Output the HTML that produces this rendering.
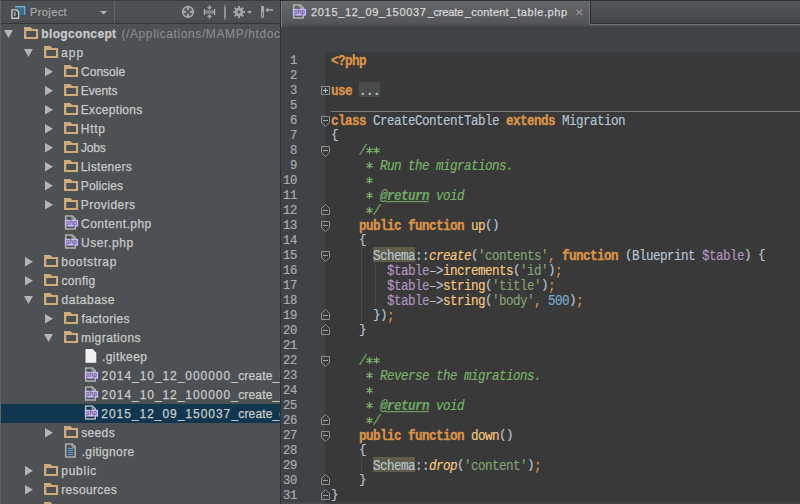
<!DOCTYPE html>
<html>
<head>
<meta charset="utf-8">
<title>PhpStorm</title>
<style>
*{margin:0;padding:0;box-sizing:border-box}
html,body{width:800px;height:504px;overflow:hidden;background:#4d5153}
body{position:relative;font-family:"Liberation Sans",sans-serif;font-size:12px;color:#c8caca}
.abs{position:absolute}
svg{position:absolute;overflow:visible}
/* ---------- sidebar ---------- */
#side{position:absolute;left:0;top:0;width:280px;height:504px;background:#4d5153;overflow:hidden}
#side:before{content:"";position:absolute;left:0;top:0;width:1px;height:504px;background:#5f6365;z-index:5}
#hdr{position:absolute;left:0;top:0;width:280px;height:24px;background:linear-gradient(#4d5153 0,#4b4f52 18px,#464a4d 22px);border-top:1px solid #393c3e;border-bottom:1px solid #34373a}
.row{position:absolute;left:0;width:280px;height:19px;white-space:nowrap}
.tx{position:absolute;white-space:nowrap;font-size:12px;line-height:14px;color:#c8caca;-webkit-text-stroke:0.25px}
.tx.b{font-weight:bold}
.hid{visibility:hidden}
.tx.g{color:#8b8e90;-webkit-text-stroke:0.1px}
.tx.g2{color:#a6a8aa;font-size:11px}
.tx.tt{color:#d6d8d9;font-size:11px}
.row.sel{background:#10374f}
/* ---------- editor ---------- */
#split{position:absolute;left:280px;top:0;width:1px;height:504px;background:#2e3032}
#ed{position:absolute;left:281px;top:0;width:519px;height:504px;background:#3f4346;overflow:hidden}
#tabbar{position:absolute;left:0;top:0;width:519px;height:27px;background:#2e3032}
#tabbar .inact{position:absolute;left:309px;top:1px;width:210px;height:22px;background:linear-gradient(#5a5c5e 0,#515355 1px,#515355 2px,#464849 100%);border-left:1px solid #2e3032}
#tabbar .strip{position:absolute;left:309px;top:24px;width:210px;height:3px;background:linear-gradient(#6c6e70 0,#6c6e70 1px,#535558 1px,#44474a 100%)}
#tab{position:absolute;left:0;top:1px;width:309px;height:26px;background:linear-gradient(#6f7173 0,#646668 1px,#5d5f61 10px,#55575a 20px,#505255 23px,#44474a 100%);border-left:1px solid #7b7d7f}
#tab:after{content:"";position:absolute;right:0;top:0;width:1px;height:24px;background:#727476}
#code{position:absolute;left:44px;top:52px;width:475px;height:452px;background:#393939}
.ln{position:absolute;left:0;width:16px;text-align:right;height:15px;line-height:15px;font-family:"Liberation Mono",monospace;font-size:12.2px;letter-spacing:-0.32px;color:#a6abae;-webkit-text-stroke:0.2px;transform:scaleY(1.12);transform-origin:0 0}
.cl{position:absolute;left:50px;height:15px;line-height:15px;white-space:pre;font-family:"Liberation Mono",monospace;font-size:12.6px;letter-spacing:-0.56px;color:#b7c4d1;-webkit-text-stroke:0.15px;transform:scaleY(1.1);transform-origin:0 0}
.br{display:inline-block;transform:translateY(-1px) scaleY(.87);transform-origin:50% 6.8px}
.k{color:#dc9349;font-weight:bold;-webkit-text-stroke:0.3px}
.s{color:#82a274}
.v{color:#b093bd}
.n{color:#7aaad0}
.f{color:#f9c87f}
.fi{color:#f9c87f;font-style:italic}
.o{color:#dc9349}
.d{color:#79b26a;font-style:italic}
.dt{color:#70a663;font-style:italic;font-weight:bold;text-decoration:underline}
.fd{color:#b4c2ce;font-weight:bold}
</style>
</head>
<body>
<div id="side">
<div id="hdr">
<svg style="left:10.5px;top:5px" width="15" height="13" viewBox="0 0 15 13"><rect x="4" y="0.3" width="10" height="8.7" fill="#3f6a89"/><path d="M4 0.6H13.7V9" fill="none" stroke="#73b3df" stroke-width="1.1"/><path d="M0.9 3.9H5.6L7.6 5.9V12.3H0.9Z" fill="#3c3f41" stroke="#c3c5c6" stroke-width="1.4"/><rect x="2.6" y="5.6" width="2.3" height="4.6" fill="#8a8c8e"/></svg>
<span class="tx g2 " id="t_proj" style="left:29.99px;top:4px;letter-spacing:0.395px">Project</span>
<svg style="left:99.5px;top:10.3px" width="7" height="4" viewBox="0 0 7 4"><path d="M0 0H7L3.5 3.6Z" fill="#b4b6b7"/></svg>
<div class="abs" style="left:114px;top:0;width:1px;height:22px;background:#5f6365"></div>
<svg style="left:181px;top:4px" width="14" height="14" viewBox="0 0 14 14"><circle cx="7" cy="6.9" r="5.3" fill="none" stroke="#a2a5a7" stroke-width="1.7"/><path d="M7 1.5V5.2M7 8.6V12.3M1.6 6.9H5.3M8.7 6.9H12.4" stroke="#a2a5a7" stroke-width="2.2"/></svg>
<svg style="left:203px;top:3px" width="13" height="16" viewBox="0 0 13 16"><rect x="1.4" y="6.3" width="10.2" height="3.4" fill="#85878a"/><path d="M1.4 5V11M11.6 5V11" stroke="#b6b8ba" stroke-width="1.1"/><path d="M6.5 1V4M6.5 12V15" stroke="#a2a5a7" stroke-width="1.3"/><path d="M3.9 2.9H9.1L6.5 5.9ZM3.9 13.1H9.1L6.5 10.1Z" fill="#a2a5a7"/></svg>
<div class="abs" style="left:224px;top:3px;width:2px;height:17px;background:linear-gradient(#4d5153,#929496 22%,#929496 78%,#4b4f52)"></div>
<svg style="left:232px;top:4px" width="14" height="14" viewBox="0 0 14 14"><path fill-rule="evenodd" d="M12.98 5.81L12.98 8.19L11.32 7.86L10.66 9.44L12.07 10.39L10.39 12.07L9.44 10.66L7.86 11.32L8.19 12.98L5.81 12.98L6.14 11.32L4.56 10.66L3.61 12.07L1.93 10.39L3.34 9.44L2.68 7.86L1.02 8.19L1.02 5.81L2.68 6.14L3.34 4.56L1.93 3.61L3.61 1.93L4.56 3.34L6.14 2.68L5.81 1.02L8.19 1.02L7.86 2.68L9.44 3.34L10.39 1.93L12.07 3.61L10.66 4.56L11.32 6.14Z M8.5 7A1.5 1.5 0 1 0 5.5 7A1.5 1.5 0 1 0 8.5 7Z" fill="#a2a5a7"/></svg>
<svg style="left:247px;top:9.9px" width="5" height="3" viewBox="0 0 5 3"><path d="M0 0H5L2.5 3Z" fill="#a2a5a7"/></svg>
<svg style="left:261px;top:5px" width="13" height="12" viewBox="0 0 13 12"><rect x="0" y="0" width="3.1" height="11.6" fill="#a3a5a7"/><rect x="1.1" y="6" width="0.9" height="4.6" fill="#5a5d60"/><path d="M5 3.9H12" stroke="#a2a5a7" stroke-width="1.6"/><path d="M4.2 3.9L7.3 1.4V6.4Z" fill="#a2a5a7"/></svg>
</div>
<div class="row" style="top:24px"><svg style="left:4.2px;top:6px" width="9" height="8" viewBox="0 0 9 8"><path d="M0 0H9L4.5 8Z" fill="#b2b4b5"/></svg><svg style="left:24px;top:3px" width="14" height="12" viewBox="0 0 14 12"><path fill-rule="evenodd" d="M0 0H6.1L8.4 2.1H14.1V12H0Z M2.3 4.1H12V9.9H2.3Z" fill="#cfaa7b"/></svg><span class="tx b" id="r0" style="left:41.27px;top:3px;letter-spacing:0.350px">blogconcept</span><span class="tx g" id="r0g" style="left:121.45px;top:3px;letter-spacing:0.604px">(/Applications/MAMP/htdocs/blogconcept)</span></div>
<div class="row" style="top:43px"><svg style="left:24.2px;top:6px" width="9" height="8" viewBox="0 0 9 8"><path d="M0 0H9L4.5 8Z" fill="#b2b4b5"/></svg><svg style="left:44px;top:3px" width="14" height="12" viewBox="0 0 14 12"><path fill-rule="evenodd" d="M0 0H6.1L8.4 2.1H14.1V12H0Z M2.3 4.1H12V9.9H2.3Z" fill="#cfaa7b"/></svg><span class="tx " id="r1" style="left:61.11px;top:3px;letter-spacing:1.021px">app</span></div>
<div class="row" style="top:62px"><svg style="left:45.2px;top:5px" width="8" height="10" viewBox="0 0 8 10"><path d="M0 0L8 4.75L0 9.5Z" fill="#b2b4b5"/></svg><svg style="left:64px;top:3px" width="14" height="12" viewBox="0 0 14 12"><path fill-rule="evenodd" d="M0 0H6.1L8.4 2.1H14.1V12H0Z M2.3 4.1H12V9.9H2.3Z" fill="#cfaa7b"/></svg><span class="tx " id="r2" style="left:81.05px;top:3px;letter-spacing:0.007px">Console</span></div>
<div class="row" style="top:81px"><svg style="left:45.2px;top:5px" width="8" height="10" viewBox="0 0 8 10"><path d="M0 0L8 4.75L0 9.5Z" fill="#b2b4b5"/></svg><svg style="left:64px;top:3px" width="14" height="12" viewBox="0 0 14 12"><path fill-rule="evenodd" d="M0 0H6.1L8.4 2.1H14.1V12H0Z M2.3 4.1H12V9.9H2.3Z" fill="#cfaa7b"/></svg><span class="tx " id="r3" style="left:80.76px;top:3px;letter-spacing:-0.002px">Events</span></div>
<div class="row" style="top:100px"><svg style="left:45.2px;top:5px" width="8" height="10" viewBox="0 0 8 10"><path d="M0 0L8 4.75L0 9.5Z" fill="#b2b4b5"/></svg><svg style="left:64px;top:3px" width="14" height="12" viewBox="0 0 14 12"><path fill-rule="evenodd" d="M0 0H6.1L8.4 2.1H14.1V12H0Z M2.3 4.1H12V9.9H2.3Z" fill="#cfaa7b"/></svg><span class="tx " id="r4" style="left:80.76px;top:3px;letter-spacing:0.324px">Exceptions</span></div>
<div class="row" style="top:119px"><svg style="left:45.2px;top:5px" width="8" height="10" viewBox="0 0 8 10"><path d="M0 0L8 4.75L0 9.5Z" fill="#b2b4b5"/></svg><svg style="left:64px;top:3px" width="14" height="12" viewBox="0 0 14 12"><path fill-rule="evenodd" d="M0 0H6.1L8.4 2.1H14.1V12H0Z M2.3 4.1H12V9.9H2.3Z" fill="#cfaa7b"/></svg><span class="tx " id="r5" style="left:80.85px;top:3px;letter-spacing:0.676px">Http</span></div>
<div class="row" style="top:138px"><svg style="left:45.2px;top:5px" width="8" height="10" viewBox="0 0 8 10"><path d="M0 0L8 4.75L0 9.5Z" fill="#b2b4b5"/></svg><svg style="left:64px;top:3px" width="14" height="12" viewBox="0 0 14 12"><path fill-rule="evenodd" d="M0 0H6.1L8.4 2.1H14.1V12H0Z M2.3 4.1H12V9.9H2.3Z" fill="#cfaa7b"/></svg><span class="tx " id="r6" style="left:80.90px;top:3px;letter-spacing:-0.175px">Jobs</span></div>
<div class="row" style="top:157px"><svg style="left:45.2px;top:5px" width="8" height="10" viewBox="0 0 8 10"><path d="M0 0L8 4.75L0 9.5Z" fill="#b2b4b5"/></svg><svg style="left:64px;top:3px" width="14" height="12" viewBox="0 0 14 12"><path fill-rule="evenodd" d="M0 0H6.1L8.4 2.1H14.1V12H0Z M2.3 4.1H12V9.9H2.3Z" fill="#cfaa7b"/></svg><span class="tx " id="r7" style="left:80.85px;top:3px;letter-spacing:0.278px">Listeners</span></div>
<div class="row" style="top:176px"><svg style="left:45.2px;top:5px" width="8" height="10" viewBox="0 0 8 10"><path d="M0 0L8 4.75L0 9.5Z" fill="#b2b4b5"/></svg><svg style="left:64px;top:3px" width="14" height="12" viewBox="0 0 14 12"><path fill-rule="evenodd" d="M0 0H6.1L8.4 2.1H14.1V12H0Z M2.3 4.1H12V9.9H2.3Z" fill="#cfaa7b"/></svg><span class="tx " id="r8" style="left:80.76px;top:3px;letter-spacing:0.130px">Policies</span></div>
<div class="row" style="top:195px"><svg style="left:45.2px;top:5px" width="8" height="10" viewBox="0 0 8 10"><path d="M0 0L8 4.75L0 9.5Z" fill="#b2b4b5"/></svg><svg style="left:64px;top:3px" width="14" height="12" viewBox="0 0 14 12"><path fill-rule="evenodd" d="M0 0H6.1L8.4 2.1H14.1V12H0Z M2.3 4.1H12V9.9H2.3Z" fill="#cfaa7b"/></svg><span class="tx " id="r9" style="left:80.76px;top:3px;letter-spacing:0.458px">Providers</span></div>
<div class="row" style="top:214px"><svg style="left:64px;top:1px" width="14" height="16" viewBox="0 0 14 16"><path d="M1.7 1H8.3L11.2 3.9V14H1.7Z" fill="none" stroke="#adafb0" stroke-width="1.6"/><path d="M8 1V4.2H11.2" fill="none" stroke="#adafb0" stroke-width="1"/><rect x="0.9" y="4.8" width="13.2" height="6.8" fill="#c7bbf8"/><text x="7.5" y="10.2" font-family="Liberation Sans" font-size="7.6" font-weight="bold" fill="#6e6390" text-anchor="middle" textLength="11" lengthAdjust="spacingAndGlyphs">php</text></svg><span class="tx " id="r10" style="left:81.05px;top:3px;letter-spacing:0.482px">Content.php</span></div>
<div class="row" style="top:233px"><svg style="left:64px;top:1px" width="14" height="16" viewBox="0 0 14 16"><path d="M1.7 1H8.3L11.2 3.9V14H1.7Z" fill="none" stroke="#adafb0" stroke-width="1.6"/><path d="M8 1V4.2H11.2" fill="none" stroke="#adafb0" stroke-width="1"/><rect x="0.9" y="4.8" width="13.2" height="6.8" fill="#c7bbf8"/><text x="7.5" y="10.2" font-family="Liberation Sans" font-size="7.6" font-weight="bold" fill="#6e6390" text-anchor="middle" textLength="11" lengthAdjust="spacingAndGlyphs">php</text></svg><span class="tx " id="r11" style="left:80.90px;top:3px;letter-spacing:0.607px">User.php</span></div>
<div class="row" style="top:252px"><svg style="left:25.2px;top:5px" width="8" height="10" viewBox="0 0 8 10"><path d="M0 0L8 4.75L0 9.5Z" fill="#b2b4b5"/></svg><svg style="left:44px;top:3px" width="14" height="12" viewBox="0 0 14 12"><path fill-rule="evenodd" d="M0 0H6.1L8.4 2.1H14.1V12H0Z M2.3 4.1H12V9.9H2.3Z" fill="#cfaa7b"/></svg><span class="tx " id="r12" style="left:61.26px;top:3px;letter-spacing:0.627px">bootstrap</span></div>
<div class="row" style="top:271px"><svg style="left:25.2px;top:5px" width="8" height="10" viewBox="0 0 8 10"><path d="M0 0L8 4.75L0 9.5Z" fill="#b2b4b5"/></svg><svg style="left:44px;top:3px" width="14" height="12" viewBox="0 0 14 12"><path fill-rule="evenodd" d="M0 0H6.1L8.4 2.1H14.1V12H0Z M2.3 4.1H12V9.9H2.3Z" fill="#cfaa7b"/></svg><span class="tx " id="r13" style="left:61.46px;top:3px;letter-spacing:0.364px">config</span></div>
<div class="row" style="top:290px"><svg style="left:24.2px;top:6px" width="9" height="8" viewBox="0 0 9 8"><path d="M0 0H9L4.5 8Z" fill="#b2b4b5"/></svg><svg style="left:44px;top:3px" width="14" height="12" viewBox="0 0 14 12"><path fill-rule="evenodd" d="M0 0H6.1L8.4 2.1H14.1V12H0Z M2.3 4.1H12V9.9H2.3Z" fill="#cfaa7b"/></svg><span class="tx " id="r14" style="left:61.52px;top:3px;letter-spacing:0.519px">database</span></div>
<div class="row" style="top:309px"><svg style="left:45.2px;top:5px" width="8" height="10" viewBox="0 0 8 10"><path d="M0 0L8 4.75L0 9.5Z" fill="#b2b4b5"/></svg><svg style="left:64px;top:3px" width="14" height="12" viewBox="0 0 14 12"><path fill-rule="evenodd" d="M0 0H6.1L8.4 2.1H14.1V12H0Z M2.3 4.1H12V9.9H2.3Z" fill="#cfaa7b"/></svg><span class="tx " id="r15" style="left:81.50px;top:3px;letter-spacing:0.329px">factories</span></div>
<div class="row" style="top:328px"><svg style="left:44.2px;top:6px" width="9" height="8" viewBox="0 0 9 8"><path d="M0 0H9L4.5 8Z" fill="#b2b4b5"/></svg><svg style="left:64px;top:3px" width="14" height="12" viewBox="0 0 14 12"><path fill-rule="evenodd" d="M0 0H6.1L8.4 2.1H14.1V12H0Z M2.3 4.1H12V9.9H2.3Z" fill="#cfaa7b"/></svg><span class="tx " id="r16" style="left:80.94px;top:3px;letter-spacing:0.470px">migrations</span></div>
<div class="row" style="top:347px"><svg style="left:85px;top:2px" width="12" height="15" viewBox="0 0 12 15"><path d="M0.5 0H7.5L11.3 3.8V13.8H0.5Z" fill="#f2f2f2"/></svg><span class="tx " id="r17" style="left:101.95px;top:3px;letter-spacing:0.423px">.gitkeep</span></div>
<div class="row" style="top:366px"><svg style="left:84px;top:1px" width="14" height="16" viewBox="0 0 14 16"><path d="M1.7 1H8.3L11.2 3.9V14H1.7Z" fill="none" stroke="#adafb0" stroke-width="1.6"/><path d="M8 1V4.2H11.2" fill="none" stroke="#adafb0" stroke-width="1"/><rect x="0.9" y="4.8" width="13.2" height="6.8" fill="#c7bbf8"/><text x="7.5" y="10.2" font-family="Liberation Sans" font-size="7.6" font-weight="bold" fill="#6e6390" text-anchor="middle" textLength="11" lengthAdjust="spacingAndGlyphs">php</text></svg><span class="tx " id="r18" style="left:101.55px;top:3px;letter-spacing:0.945px">2014_10_12_000000</span><span class="tx " id="r18b" style="left:231.30px;top:3px;letter-spacing:0.176px">_create_users_table.php</span></div>
<div class="row" style="top:385px"><svg style="left:84px;top:1px" width="14" height="16" viewBox="0 0 14 16"><path d="M1.7 1H8.3L11.2 3.9V14H1.7Z" fill="none" stroke="#adafb0" stroke-width="1.6"/><path d="M8 1V4.2H11.2" fill="none" stroke="#adafb0" stroke-width="1"/><rect x="0.9" y="4.8" width="13.2" height="6.8" fill="#c7bbf8"/><text x="7.5" y="10.2" font-family="Liberation Sans" font-size="7.6" font-weight="bold" fill="#6e6390" text-anchor="middle" textLength="11" lengthAdjust="spacingAndGlyphs">php</text></svg><span class="tx " id="r19" style="left:101.55px;top:3px;letter-spacing:0.945px">2014_10_12_100000</span><span class="tx " id="r19b" style="left:231.30px;top:3px;letter-spacing:0.176px">_create_password_resets_table.php</span></div>
<div class="row sel" style="top:404px"><svg style="left:84px;top:1px" width="14" height="16" viewBox="0 0 14 16"><path d="M1.7 1H8.3L11.2 3.9V14H1.7Z" fill="none" stroke="#adafb0" stroke-width="1.6"/><path d="M8 1V4.2H11.2" fill="none" stroke="#adafb0" stroke-width="1"/><rect x="0.9" y="4.8" width="13.2" height="6.8" fill="#c7bbf8"/><text x="7.5" y="10.2" font-family="Liberation Sans" font-size="7.6" font-weight="bold" fill="#6e6390" text-anchor="middle" textLength="11" lengthAdjust="spacingAndGlyphs">php</text></svg><span class="tx " id="r20" style="left:101.28px;top:3px;letter-spacing:0.971px">2015_12_09_150037</span><span class="tx " id="r20b" style="left:231.50px;top:3px;letter-spacing:0.141px">_create_content_table.php</span></div>
<div class="row" style="top:423px"><svg style="left:45.2px;top:5px" width="8" height="10" viewBox="0 0 8 10"><path d="M0 0L8 4.75L0 9.5Z" fill="#b2b4b5"/></svg><svg style="left:64px;top:3px" width="14" height="12" viewBox="0 0 14 12"><path fill-rule="evenodd" d="M0 0H6.1L8.4 2.1H14.1V12H0Z M2.3 4.1H12V9.9H2.3Z" fill="#cfaa7b"/></svg><span class="tx " id="r21" style="left:81.19px;top:3px;letter-spacing:0.357px">seeds</span></div>
<div class="row" style="top:442px"><svg style="left:64px;top:1px" width="14" height="16" viewBox="0 0 14 16"><path d="M1.7 1H8.3L11.2 3.9V14H1.7Z" fill="none" stroke="#a9abac" stroke-width="1.6"/><path d="M8 1V4.2H11.2" fill="none" stroke="#a9abac" stroke-width="1"/><path d="M4 5.5H9M4 7.5H9M4 9.5H9M4 11.5H9" stroke="#5ea6d8" stroke-width="1"/></svg><span class="tx " id="r22" style="left:81.70px;top:3px;letter-spacing:0.345px">.gitignore</span></div>
<div class="row" style="top:461px"><svg style="left:25.2px;top:5px" width="8" height="10" viewBox="0 0 8 10"><path d="M0 0L8 4.75L0 9.5Z" fill="#b2b4b5"/></svg><svg style="left:44px;top:3px" width="14" height="12" viewBox="0 0 14 12"><path fill-rule="evenodd" d="M0 0H6.1L8.4 2.1H14.1V12H0Z M2.3 4.1H12V9.9H2.3Z" fill="#cfaa7b"/></svg><span class="tx " id="r23" style="left:61.26px;top:3px;letter-spacing:0.735px">public</span></div>
<div class="row" style="top:480px"><svg style="left:25.2px;top:5px" width="8" height="10" viewBox="0 0 8 10"><path d="M0 0L8 4.75L0 9.5Z" fill="#b2b4b5"/></svg><svg style="left:44px;top:3px" width="14" height="12" viewBox="0 0 14 12"><path fill-rule="evenodd" d="M0 0H6.1L8.4 2.1H14.1V12H0Z M2.3 4.1H12V9.9H2.3Z" fill="#cfaa7b"/></svg><span class="tx " id="r24" style="left:61.21px;top:3px;letter-spacing:0.346px">resources</span></div>
<div class="row" style="top:499px"><svg style="left:25.2px;top:5px" width="8" height="10" viewBox="0 0 8 10"><path d="M0 0L8 4.75L0 9.5Z" fill="#b2b4b5"/></svg><svg style="left:44px;top:3px" width="14" height="12" viewBox="0 0 14 12"><path fill-rule="evenodd" d="M0 0H6.1L8.4 2.1H14.1V12H0Z M2.3 4.1H12V9.9H2.3Z" fill="#cfaa7b"/></svg><span class="tx " id="r25" style="left:60.80px;top:3px;letter-spacing:0.300px">storage</span></div>
</div>
<div id="split"></div>
<div id="ed">
<div id="tabbar"><div class="inact"></div><div class="strip"></div><div id="tab"></div>
<svg style="left:11.2px;top:4px" width="14" height="16" viewBox="0 0 14 16"><path d="M1.7 1H8.3L11.2 3.9V14H1.7Z" fill="none" stroke="#adafb0" stroke-width="1.6"/><path d="M8 1V4.2H11.2" fill="none" stroke="#adafb0" stroke-width="1"/><rect x="0.9" y="4.8" width="13.2" height="6.8" fill="#c7bbf8"/><text x="7.5" y="10.2" font-family="Liberation Sans" font-size="7.6" font-weight="bold" fill="#6e6390" text-anchor="middle" textLength="11" lengthAdjust="spacingAndGlyphs">php</text></svg>
<span class="tx tt" id="t_tab" style="left:30.04px;top:5px;letter-spacing:0.679px">2015_12_09_150037</span>
<span class="tx tt" id="t_tabb" style="left:146.42px;top:5px;letter-spacing:-0.110px">_create</span>
<span class="tx tt" id="t_tabc" style="left:183.85px;top:5px;letter-spacing:0.231px">_content</span>
<span class="tx tt" id="t_tabd" style="left:229.46px;top:5px;letter-spacing:0.591px">_table.php</span>
<svg style="left:294.6px;top:8.8px" width="7" height="7" viewBox="0 0 7 7"><path d="M0.4 0.4L6.2 6.2M6.2 0.4L0.4 6.2" stroke="#98999b" stroke-width="1.1"/></svg>
</div>
<div id="code"></div>
<div class="abs" style="left:92px;top:247px;width:42px;height:15px;background:#5f5d49"></div>
<div class="abs" style="left:92px;top:457px;width:42px;height:15px;background:#5f5d49"></div>
<div class="abs" style="left:78px;top:82px;width:21px;height:15px;background:#494a4a"></div>
<div class="ln" style="top:53px">1</div>
<div class="cl" style="top:53.5px"><span class="k">&lt;?php</span></div>
<div class="ln" style="top:68px">2</div>
<div class="ln" style="top:83px">3</div>
<div class="cl" style="top:83.5px"><span class="k">use</span> <span class="fd">...</span></div>
<div class="ln" style="top:98px">5</div>
<div class="ln" style="top:113px">6</div>
<div class="cl" style="top:113.5px"><span class="k">class</span> CreateContentTable <span class="k">extends</span> Migration</div>
<div class="ln" style="top:128px">7</div>
<div class="cl" style="top:128.5px"><span class="br">{</span></div>
<div class="ln" style="top:143px">8</div>
<div class="cl" style="top:143.5px">    <span class="d">/  </span></div>
<div class="ln" style="top:158px">9</div>
<div class="cl" style="top:158.5px">    <span class="d">   Run the migrations.</span></div>
<div class="ln" style="top:173px">10</div>
<div class="cl" style="top:173.5px">    <span class="d">  </span></div>
<div class="ln" style="top:188px">11</div>
<div class="cl" style="top:188.5px">    <span class="d">   </span><span class="dt">@return</span><span class="d"> void</span></div>
<div class="ln" style="top:203px">12</div>
<div class="cl" style="top:203.5px">    <span class="d">  /</span></div>
<div class="ln" style="top:218px">13</div>
<div class="cl" style="top:218.5px">    <span class="k">public function</span> <span class="f">up</span><span class="br">(</span><span class="br">)</span></div>
<div class="ln" style="top:233px">14</div>
<div class="cl" style="top:233.5px">    <span class="br">{</span></div>
<div class="ln" style="top:248px">15</div>
<div class="cl" style="top:248.5px">      Schema::<span class="fi">create</span><span class="br">(</span><span class="s">&#x27;contents&#x27;</span><span class="o">,</span> <span class="k">function</span> <span class="br">(</span>Blueprint <span class="v">$table</span><span class="br">)</span> <span class="br">{</span></div>
<div class="ln" style="top:263px">16</div>
<div class="cl" style="top:263.5px">        <span class="v">$table</span>–><span class="f">increments</span><span class="br">(</span><span class="s">&#x27;id&#x27;</span><span class="br">)</span><span class="o">;</span></div>
<div class="ln" style="top:278px">17</div>
<div class="cl" style="top:278.5px">        <span class="v">$table</span>–><span class="f">string</span><span class="br">(</span><span class="s">&#x27;title&#x27;</span><span class="br">)</span><span class="o">;</span></div>
<div class="ln" style="top:293px">18</div>
<div class="cl" style="top:293.5px">        <span class="v">$table</span>–><span class="f">string</span><span class="br">(</span><span class="s">&#x27;body&#x27;</span><span class="o">,</span> <span class="n">500</span><span class="br">)</span><span class="o">;</span></div>
<div class="ln" style="top:308px">19</div>
<div class="cl" style="top:308.5px">      <span class="br">}</span><span class="br">)</span><span class="o">;</span></div>
<div class="ln" style="top:323px">20</div>
<div class="cl" style="top:323.5px">    <span class="br">}</span></div>
<div class="ln" style="top:338px">21</div>
<div class="ln" style="top:353px">22</div>
<div class="cl" style="top:353.5px">    <span class="d">/  </span></div>
<div class="ln" style="top:368px">23</div>
<div class="cl" style="top:368.5px">    <span class="d">   Reverse the migrations.</span></div>
<div class="ln" style="top:383px">24</div>
<div class="cl" style="top:383.5px">    <span class="d">  </span></div>
<div class="ln" style="top:398px">25</div>
<div class="cl" style="top:398.5px">    <span class="d">   </span><span class="dt">@return</span><span class="d"> void</span></div>
<div class="ln" style="top:413px">26</div>
<div class="cl" style="top:413.5px">    <span class="d">  /</span></div>
<div class="ln" style="top:428px">27</div>
<div class="cl" style="top:428.5px">    <span class="k">public function</span> <span class="f">down</span><span class="br">(</span><span class="br">)</span></div>
<div class="ln" style="top:443px">28</div>
<div class="cl" style="top:443.5px">    <span class="br">{</span></div>
<div class="ln" style="top:458px">29</div>
<div class="cl" style="top:458.5px">      Schema::<span class="fi">drop</span><span class="br">(</span><span class="s">&#x27;content&#x27;</span><span class="br">)</span><span class="o">;</span></div>
<div class="ln" style="top:473px">30</div>
<div class="cl" style="top:473.5px">    <span class="br">}</span></div>
<div class="ln" style="top:488px">31</div>
<div class="cl" style="top:488.5px"><span class="br">}</span></div>
<svg style="left:40px;top:86px" width="9" height="9" viewBox="0 0 9 9"><rect x="0.5" y="0.5" width="8" height="8" fill="none" stroke="#8c8e8f"/><path d="M2 4.5H7M4.5 2V7" stroke="#c4c6c7" stroke-width="0.9"/></svg>
<svg style="left:40px;top:116px" width="9" height="11" viewBox="0 0 9 11"><path d="M0.5 0.5H8.5V6.7L4.5 10.5L0.5 6.7Z" fill="none" stroke="#8c8e8f"/><path d="M2 4.5H7" stroke="#9c9e9f" stroke-width="1"/></svg>
<svg style="left:40px;top:146px" width="9" height="11" viewBox="0 0 9 11"><path d="M0.5 0.5H8.5V6.7L4.5 10.5L0.5 6.7Z" fill="none" stroke="#8c8e8f"/><path d="M2 4.5H7" stroke="#9c9e9f" stroke-width="1"/></svg>
<svg style="left:40px;top:204px" width="9" height="11" viewBox="0 0 9 11"><path d="M0.5 10.5H8.5V4.3L4.5 0.5L0.5 4.3Z" fill="none" stroke="#8c8e8f"/><path d="M2 6.5H7" stroke="#9c9e9f" stroke-width="1"/></svg>
<svg style="left:40px;top:221px" width="9" height="11" viewBox="0 0 9 11"><path d="M0.5 0.5H8.5V6.7L4.5 10.5L0.5 6.7Z" fill="none" stroke="#8c8e8f"/><path d="M2 4.5H7" stroke="#9c9e9f" stroke-width="1"/></svg>
<svg style="left:40px;top:251px" width="9" height="11" viewBox="0 0 9 11"><path d="M0.5 0.5H8.5V6.7L4.5 10.5L0.5 6.7Z" fill="none" stroke="#8c8e8f"/><path d="M2 4.5H7" stroke="#9c9e9f" stroke-width="1"/></svg>
<svg style="left:40px;top:309px" width="9" height="11" viewBox="0 0 9 11"><path d="M0.5 10.5H8.5V4.3L4.5 0.5L0.5 4.3Z" fill="none" stroke="#8c8e8f"/><path d="M2 6.5H7" stroke="#9c9e9f" stroke-width="1"/></svg>
<svg style="left:40px;top:324px" width="9" height="11" viewBox="0 0 9 11"><path d="M0.5 10.5H8.5V4.3L4.5 0.5L0.5 4.3Z" fill="none" stroke="#8c8e8f"/><path d="M2 6.5H7" stroke="#9c9e9f" stroke-width="1"/></svg>
<svg style="left:40px;top:356px" width="9" height="11" viewBox="0 0 9 11"><path d="M0.5 0.5H8.5V6.7L4.5 10.5L0.5 6.7Z" fill="none" stroke="#8c8e8f"/><path d="M2 4.5H7" stroke="#9c9e9f" stroke-width="1"/></svg>
<svg style="left:40px;top:414px" width="9" height="11" viewBox="0 0 9 11"><path d="M0.5 10.5H8.5V4.3L4.5 0.5L0.5 4.3Z" fill="none" stroke="#8c8e8f"/><path d="M2 6.5H7" stroke="#9c9e9f" stroke-width="1"/></svg>
<svg style="left:40px;top:431px" width="9" height="11" viewBox="0 0 9 11"><path d="M0.5 0.5H8.5V6.7L4.5 10.5L0.5 6.7Z" fill="none" stroke="#8c8e8f"/><path d="M2 4.5H7" stroke="#9c9e9f" stroke-width="1"/></svg>
<svg style="left:40px;top:474px" width="9" height="11" viewBox="0 0 9 11"><path d="M0.5 10.5H8.5V4.3L4.5 0.5L0.5 4.3Z" fill="none" stroke="#8c8e8f"/><path d="M2 6.5H7" stroke="#9c9e9f" stroke-width="1"/></svg>
<svg style="left:40px;top:489px" width="9" height="11" viewBox="0 0 9 11"><path d="M0.5 10.5H8.5V4.3L4.5 0.5L0.5 4.3Z" fill="none" stroke="#8c8e8f"/><path d="M2 6.5H7" stroke="#9c9e9f" stroke-width="1"/></svg>
<svg style="left:85px;top:147.3px" width="7" height="7" viewBox="0 0 7 7"><path d="M3.5 0V6.8M0.5 1.7L6.5 5.1M6.5 1.7L0.5 5.1" stroke="#79b26a" stroke-width="1.25" fill="none"/></svg>
<svg style="left:92px;top:147.3px" width="7" height="7" viewBox="0 0 7 7"><path d="M3.5 0V6.8M0.5 1.7L6.5 5.1M6.5 1.7L0.5 5.1" stroke="#79b26a" stroke-width="1.25" fill="none"/></svg>
<svg style="left:85px;top:162.3px" width="7" height="7" viewBox="0 0 7 7"><path d="M3.5 0V6.8M0.5 1.7L6.5 5.1M6.5 1.7L0.5 5.1" stroke="#79b26a" stroke-width="1.25" fill="none"/></svg>
<svg style="left:85px;top:177.3px" width="7" height="7" viewBox="0 0 7 7"><path d="M3.5 0V6.8M0.5 1.7L6.5 5.1M6.5 1.7L0.5 5.1" stroke="#79b26a" stroke-width="1.25" fill="none"/></svg>
<svg style="left:85px;top:192.3px" width="7" height="7" viewBox="0 0 7 7"><path d="M3.5 0V6.8M0.5 1.7L6.5 5.1M6.5 1.7L0.5 5.1" stroke="#79b26a" stroke-width="1.25" fill="none"/></svg>
<svg style="left:85px;top:207.3px" width="7" height="7" viewBox="0 0 7 7"><path d="M3.5 0V6.8M0.5 1.7L6.5 5.1M6.5 1.7L0.5 5.1" stroke="#79b26a" stroke-width="1.25" fill="none"/></svg>
<svg style="left:85px;top:357.3px" width="7" height="7" viewBox="0 0 7 7"><path d="M3.5 0V6.8M0.5 1.7L6.5 5.1M6.5 1.7L0.5 5.1" stroke="#79b26a" stroke-width="1.25" fill="none"/></svg>
<svg style="left:92px;top:357.3px" width="7" height="7" viewBox="0 0 7 7"><path d="M3.5 0V6.8M0.5 1.7L6.5 5.1M6.5 1.7L0.5 5.1" stroke="#79b26a" stroke-width="1.25" fill="none"/></svg>
<svg style="left:85px;top:372.3px" width="7" height="7" viewBox="0 0 7 7"><path d="M3.5 0V6.8M0.5 1.7L6.5 5.1M6.5 1.7L0.5 5.1" stroke="#79b26a" stroke-width="1.25" fill="none"/></svg>
<svg style="left:85px;top:387.3px" width="7" height="7" viewBox="0 0 7 7"><path d="M3.5 0V6.8M0.5 1.7L6.5 5.1M6.5 1.7L0.5 5.1" stroke="#79b26a" stroke-width="1.25" fill="none"/></svg>
<svg style="left:85px;top:402.3px" width="7" height="7" viewBox="0 0 7 7"><path d="M3.5 0V6.8M0.5 1.7L6.5 5.1M6.5 1.7L0.5 5.1" stroke="#79b26a" stroke-width="1.25" fill="none"/></svg>
<svg style="left:85px;top:417.3px" width="7" height="7" viewBox="0 0 7 7"><path d="M3.5 0V6.8M0.5 1.7L6.5 5.1M6.5 1.7L0.5 5.1" stroke="#79b26a" stroke-width="1.25" fill="none"/></svg>
<div class="abs" style="left:50px;top:111px;width:469px;height:1px;background:#7e7e7e"></div>
<div class="abs" style="left:80px;top:247px;width:1px;height:75px;background:#454748"></div>
<div class="abs" style="left:94px;top:262px;width:1px;height:45px;background:#454748"></div>
<div class="abs" style="left:80px;top:457px;width:1px;height:15px;background:#454748"></div>
<div class="abs" style="left:0;top:502px;width:519px;height:2px;background:linear-gradient(rgba(255,255,255,0.03),rgba(255,255,255,0.05))"></div>
</div>
</body>
</html>
